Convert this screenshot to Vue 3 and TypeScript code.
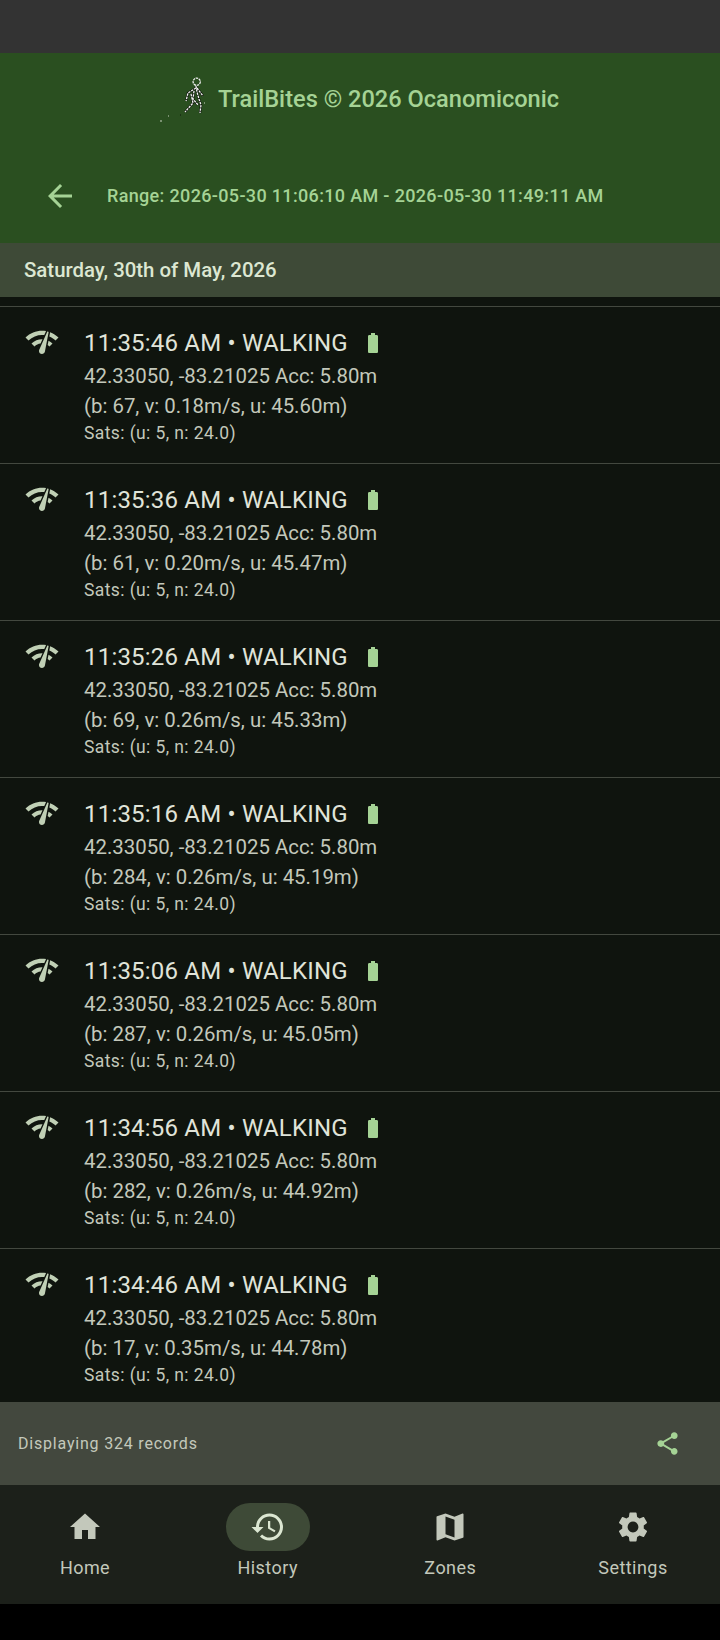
<template>
  <div class="screen">
    <div class="status-bar"></div>

    <header class="app-header">
      <div class="title-row">
        <svg class="logo" viewBox="0 0 48 48" fill="none">
          <circle cx="39.7" cy="6.7" r="3.6" stroke="#f0f0f0" stroke-width="1.3" stroke-dasharray="2.4 0.7" />
          <path d="M39 11l1 6 2 7 2 6-1 8M39 13l-8 5-2 8M40 13l6 8M34 19l2 9-8 9M37 16l-1 8 5 6" stroke="#10180c" stroke-width="2.4" />
          <path d="M39 11l1 6 2 7 2 6-1 8M39 13l-8 5-2 8M40 13l6 8M34 19l2 9-8 9M37 16l-1 8 5 6" stroke="#f4f4f4" stroke-width="1.3" stroke-dasharray="2.4 0.9" />
          <path d="M3 46h2M11 41h1M47 28h1" stroke="#c9d3c2" stroke-width="1.2" />
          <path d="M23 40h1" stroke="#10180c" stroke-width="1.2" />
        </svg>
        <span class="title">TrailBites © 2026 Ocanomiconic</span>
      </div>
      <div class="range-row">
        <svg class="back" viewBox="0 0 24 24"><path d="M20 11H7.83l5.59-5.59L12 4l-8 8 8 8 1.41-1.41L7.83 13H20v-2z" /></svg>
        <span class="range">Range: 2026-05-30 11:06:10 AM - 2026-05-30 11:49:11 AM</span>
      </div>
    </header>

    <div class="date-bar">Saturday, 30th of May, 2026</div>

    <main class="records">
      <article v-for="r in records" :key="r.time" class="record">
        <svg class="signal" viewBox="0 0 24 24"><path d="M15.9 5c-.17 0-.32.09-.41.23l-.07.15-5.18 11.65c-.16.29-.26.61-.26.96 0 1.11.9 2.01 2.01 2.01.96 0 1.77-.68 1.96-1.59l.01-.03L16.4 5.5c0-.28-.22-.5-.5-.5zM1 9l2 2c2.88-2.88 6.79-4.08 10.53-3.62l1.19-2.68C9.89 3.84 4.74 5.27 1 9zm20 2l2-2c-1.64-1.64-3.55-2.82-5.59-3.57l-.53 2.82c1.5.62 2.9 1.53 4.12 2.75zm-4 4l2-2c-.8-.8-1.7-1.42-2.66-1.89l-.55 2.92c.42.27.83.59 1.21.97zM5 13l2 2c1.13-1.13 2.56-1.79 4.03-2l1.28-2.88c-2.63-.08-5.3.87-7.31 2.88z" /></svg>
        <div class="record-body">
          <div class="record-head">
            <span class="time">{{ r.time }} • WALKING</span>
            <svg class="battery" viewBox="0 0 24 24"><path d="M15.67 4H14V2h-4v2H8.33C7.6 4 7 4.6 7 5.33v15.33C7 21.4 7.6 22 8.33 22h7.33c.74 0 1.34-.6 1.34-1.33V5.33C17 4.6 16.4 4 15.67 4z" /></svg>
          </div>
          <div class="line">42.33050, -83.21025 Acc: 5.80m</div>
          <div class="line">(b: {{ r.bearing }}, v: {{ r.speed }}m/s, u: {{ r.alt }}m)</div>
          <div class="sats">Sats: (u: 5, n: 24.0)</div>
        </div>
      </article>
    </main>

    <div class="footer-bar">
      <span class="count">Displaying 324 records</span>
      <svg class="share" viewBox="0 0 24 24"><path d="M18 16.08c-.76 0-1.44.3-1.96.77L8.91 12.7c.05-.23.09-.46.09-.7s-.04-.47-.09-.7l7.05-4.11c.54.5 1.25.81 2.04.81 1.66 0 3-1.34 3-3s-1.34-3-3-3-3 1.34-3 3c0 .24.04.47.09.7L8.04 9.81C7.5 9.31 6.79 9 6 9c-1.66 0-3 1.34-3 3s1.34 3 3 3c.79 0 1.5-.31 2.04-.81l7.12 4.16c-.05.21-.08.43-.08.65 0 1.61 1.31 2.92 2.92 2.92s2.92-1.31 2.92-2.92-1.31-2.92-2.92-2.92z" /></svg>
    </div>

    <nav class="tabs">
      <div v-for="t in tabs" :key="t.label" class="tab" :class="{ 'tab--active': t.active }">
        <div class="tab-pill">
          <svg class="tab-icon" viewBox="0 0 24 24"><path :d="t.icon" /></svg>
        </div>
        <span class="tab-label">{{ t.label }}</span>
      </div>
    </nav>
  </div>
</template>

<script setup lang="ts">
interface RecordRow {
  time: string
  bearing: number
  speed: string
  alt: string
}

const records: RecordRow[] = [
  { time: '11:35:46 AM', bearing: 67, speed: '0.18', alt: '45.60' },
  { time: '11:35:36 AM', bearing: 61, speed: '0.20', alt: '45.47' },
  { time: '11:35:26 AM', bearing: 69, speed: '0.26', alt: '45.33' },
  { time: '11:35:16 AM', bearing: 284, speed: '0.26', alt: '45.19' },
  { time: '11:35:06 AM', bearing: 287, speed: '0.26', alt: '45.05' },
  { time: '11:34:56 AM', bearing: 282, speed: '0.26', alt: '44.92' },
  { time: '11:34:46 AM', bearing: 17, speed: '0.35', alt: '44.78' }
]

const tabs = [
  { label: 'Home', icon: 'M10 20v-6h4v6h5v-8h3L12 3 2 12h3v8z' },
  {
    label: 'History',
    active: true,
    icon: 'M13 3c-4.97 0-9 4.03-9 9H1l3.89 3.89.07.14L9 12H6c0-3.87 3.13-7 7-7s7 3.13 7 7-3.13 7-7 7c-1.93 0-3.68-.79-4.94-2.06l-1.42 1.42C8.27 19.99 10.51 21 13 21c4.97 0 9-4.03 9-9s-4.03-9-9-9zm-1 5v5l4.28 2.54.72-1.21-3.5-2.08V8H12z'
  },
  {
    label: 'Zones',
    icon: 'M20.5 3l-.16.03L15 5.1 9 3 3.36 4.9c-.21.07-.36.25-.36.48V20.5c0 .28.22.5.5.5l.16-.03L9 18.9l6 2.1 5.64-1.9c.21-.07.36-.25.36-.48V3.5c0-.28-.22-.5-.5-.5zM15 19l-6-2.11V5l6 2.11V19z'
  },
  {
    label: 'Settings',
    icon: 'M19.14 12.94c.04-.3.06-.61.06-.94 0-.32-.02-.64-.07-.94l2.03-1.58c.18-.14.23-.41.12-.61l-1.92-3.32c-.12-.22-.37-.29-.59-.22l-2.39.96c-.5-.38-1.03-.7-1.62-.94l-.36-2.54c-.04-.24-.24-.41-.48-.41h-3.84c-.24 0-.43.17-.47.41l-.36 2.54c-.59.24-1.13.57-1.62.94l-2.39-.96c-.22-.08-.47 0-.59.22L2.74 8.87c-.12.21-.08.47.12.61l2.03 1.58c-.05.3-.09.63-.09.94s.02.64.07.94l-2.03 1.58c-.18.14-.23.41-.12.61l1.92 3.32c.12.22.37.29.59.22l2.39-.96c.5.38 1.03.7 1.62.94l.36 2.54c.05.24.24.41.48.41h3.84c.24 0 .44-.17.47-.41l.36-2.54c.59-.24 1.13-.56 1.62-.94l2.39.96c.22.08.47 0 .59-.22l1.92-3.32c.12-.22.07-.47-.12-.61l-2.01-1.58zM12 15.6c-1.98 0-3.6-1.62-3.6-3.6s1.62-3.6 3.6-3.6 3.6 1.62 3.6 3.6-1.62 3.6-3.6 3.6z'
  }
]
</script>

<style>
html,
body {
  background: #000;
}
</style>

<style scoped>
.screen {
  width: 720px;
  height: 1640px;
  display: flex;
  flex-direction: column;
  background: #000;
  font-family: Roboto, sans-serif;
  overflow: hidden;
}

.status-bar {
  height: 53px;
  background: #333333;
}

.app-header {
  height: 190px;
  background: #2a4f20;
  color: #a5d395;
}

.title-row {
  height: 92px;
  display: flex;
  align-items: flex-start;
  padding: 22px 0 0 157px;
  box-sizing: border-box;
}

.logo {
  width: 48px;
  height: 48px;
  flex: none;
}

.title {
  margin-left: 13px;
  font-size: 23.6px;
  font-weight: 500;
  line-height: 48px;
}

.range-row {
  height: 48px;
  margin-top: 26px;
  display: flex;
  align-items: center;
  padding-left: 42px;
}

.back {
  width: 36px;
  height: 36px;
  fill: #a5d395;
  flex: none;
  margin-top: 2px;
}

.range {
  margin-left: 29px;
  font-size: 18px;
  font-weight: 500;
  letter-spacing: 0.34px;
}

.date-bar {
  height: 54px;
  background: #3e4a37;
  color: #dce7d2;
  display: flex;
  align-items: center;
  padding-left: 24px;
  font-size: 20.4px;
  font-weight: 500;
}

.records {
  flex: 1;
  background: #0f140e;
  padding-top: 9px;
  min-height: 0;
}

.record {
  height: 157px;
  box-sizing: border-box;
  border-top: 1px solid #43483f;
  display: flex;
  padding: 18px 0 0 24px;
}

.signal {
  width: 36px;
  height: 36px;
  fill: #c0d0b5;
  flex: none;
  margin-top: -1px;
}

.record-body {
  margin-left: 24px;
}

.record-head {
  display: flex;
  align-items: center;
  height: 36px;
}

.time {
  font-size: 24px;
  color: #e0e4d9;
  letter-spacing: 0.2px;
}

.battery {
  width: 24px;
  height: 24px;
  fill: #a5d395;
  margin-left: 13px;
}

.line {
  font-size: 20.4px;
  line-height: 30px;
  color: #c3c8bb;
}

.sats {
  font-size: 17.5px;
  line-height: 24px;
  color: #c3c8bb;
  letter-spacing: 0.4px;
}

.footer-bar {
  height: 83px;
  background: #43483e;
  display: flex;
  align-items: center;
  justify-content: space-between;
  padding: 0 39px 0 18px;
  flex: none;
}

.count {
  font-size: 16px;
  color: #c3c8bb;
  letter-spacing: 0.8px;
}

.share {
  width: 27px;
  height: 27px;
  fill: #a5d395;
}

.tabs {
  height: 119px;
  background: #1c201a;
  display: flex;
  justify-content: space-between;
  padding: 18px 37px 0 35px;
  box-sizing: border-box;
  flex: none;
}

.tab {
  width: 100px;
  display: flex;
  flex-direction: column;
  align-items: center;
}

.tab-pill {
  width: 84px;
  height: 48px;
  border-radius: 24px;
  display: flex;
  align-items: center;
  justify-content: center;
}

.tab--active .tab-pill {
  background: #3e4a37;
}

.tab-icon {
  width: 36px;
  height: 36px;
  fill: #c3c8bb;
}

.tab--active .tab-icon {
  fill: #dce7d2;
}

.tab-label {
  margin-top: 3px;
  font-size: 18px;
  line-height: 27px;
  color: #c3c8bb;
  letter-spacing: 0.45px;
}

.screen::after {
  content: '';
  height: 36px;
  flex: none;
  background: #000;
}
</style>
